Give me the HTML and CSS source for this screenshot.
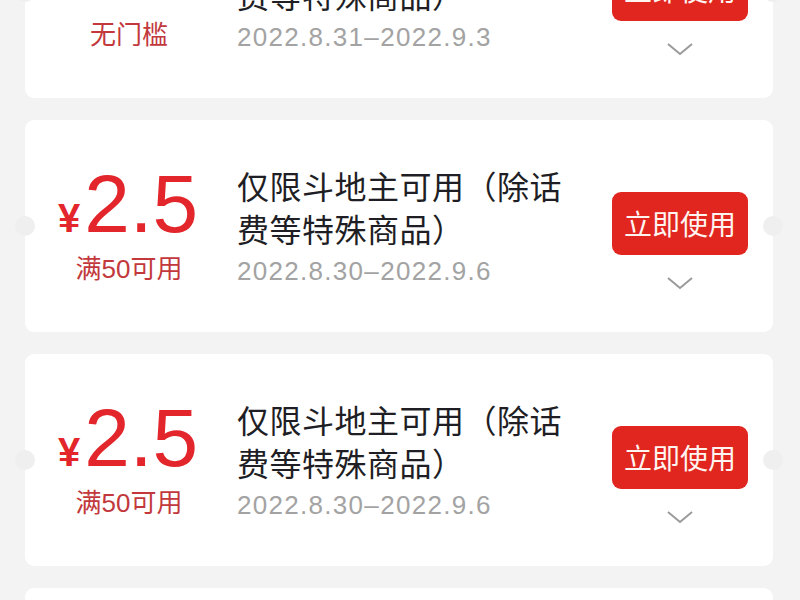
FILE: index.html
```html
<!DOCTYPE html>
<html lang="zh-CN">
<head>
<meta charset="utf-8">
<link rel="stylesheet" href="styles.css">
</head>
<body>
<div class="list">
  <div class="card">
    <div class="left">
      <div class="amount"><span class="yen">¥</span>2.5</div>
      <div class="cond">无门槛</div>
    </div>
    <div class="mid">
      <div class="title">仅限斗地主可用（除话费等特殊商品）</div>
      <div class="date">2022.8.31–2022.9.3</div>
    </div>
    <div class="right">
      <div class="btn">立即使用</div>
      <svg class="chev" width="28" height="14" viewBox="0 0 28 14"><path d="M2 2 L14 12 L26 2" fill="none" stroke="#9a9a9a" stroke-width="2"/></svg>
    </div>
  </div>
  <div class="card">
    <div class="left">
      <div class="amount"><span class="yen">¥</span>2.5</div>
      <div class="cond">满50可用</div>
    </div>
    <div class="mid">
      <div class="title">仅限斗地主可用（除话费等特殊商品）</div>
      <div class="date">2022.8.30–2022.9.6</div>
    </div>
    <div class="right">
      <div class="btn">立即使用</div>
      <svg class="chev" width="28" height="14" viewBox="0 0 28 14"><path d="M2 2 L14 12 L26 2" fill="none" stroke="#9a9a9a" stroke-width="2"/></svg>
    </div>
  </div>
  <div class="card">
    <div class="left">
      <div class="amount"><span class="yen">¥</span>2.5</div>
      <div class="cond">满50可用</div>
    </div>
    <div class="mid">
      <div class="title">仅限斗地主可用（除话费等特殊商品）</div>
      <div class="date">2022.8.30–2022.9.6</div>
    </div>
    <div class="right">
      <div class="btn">立即使用</div>
      <svg class="chev" width="28" height="14" viewBox="0 0 28 14"><path d="M2 2 L14 12 L26 2" fill="none" stroke="#9a9a9a" stroke-width="2"/></svg>
    </div>
  </div>
  <div class="card">
    <div class="left">
      <div class="amount"><span class="yen">¥</span>2.5</div>
      <div class="cond">满50可用</div>
    </div>
    <div class="mid">
      <div class="title">仅限斗地主可用（除话费等特殊商品）</div>
      <div class="date">2022.8.30–2022.9.6</div>
    </div>
    <div class="right">
      <div class="btn">立即使用</div>
      <svg class="chev" width="28" height="14" viewBox="0 0 28 14"><path d="M2 2 L14 12 L26 2" fill="none" stroke="#9a9a9a" stroke-width="2"/></svg>
    </div>
  </div>
</div>
</body>
</html>
```
FILE: styles.css
```css
html, body {
  margin: 0;
  padding: 0;
  background: #f3f3f3;
  overflow: hidden;
  height: 600px;
}
body {
  font-family: "Liberation Sans", "Noto Sans CJK SC", sans-serif;
}
.list {
  margin-top: -114px;
  padding: 0 27px 0 25px;
  display: flex;
  flex-direction: column;
  gap: 22px;
}
.card {
  position: relative;
  height: 212px;
  background: #fff;
  border-radius: 9px;
  display: flex;
  align-items: flex-start;
  box-sizing: border-box;
  padding-top: 44px;
}
.card::before,
.card::after {
  content: "";
  position: absolute;
  top: 50%;
  width: 20px;
  height: 20px;
  margin-top: -10px;
  border-radius: 50%;
  background: #efefef;
}
.card::before { left: -10px; }
.card::after { right: -10px; }
.left {
  width: 208px;
  display: flex;
  flex-direction: column;
  align-items: center;
  color: #e3262b;
}
.amount {
  font-family: "Liberation Sans", sans-serif;
  font-size: 82px;
  line-height: 80px;
  height: 80px;
  padding-right: 2px;
}
.yen {
  font-size: 40px;
  font-weight: bold;
  margin-right: 4px;
}
.cond {
  margin-top: 10px;
  font-family: "Liberation Sans", "Noto Sans CJK SC", sans-serif;
  font-size: 26px;
  line-height: 30px;
  color: #c2383c;
}
.mid {
  width: 340px;
  padding-left: 4px;
  color: #1e1e24;
}
.title {
  font-family: "Noto Sans CJK SC", sans-serif;
  font-size: 32px;
  line-height: 43px;
  letter-spacing: 0.5px;
}
.date {
  margin-top: 4px;
  font-family: "Liberation Sans", sans-serif;
  font-size: 26px;
  line-height: 34px;
  letter-spacing: 1.3px;
  color: #a3a3a3;
}
.right {
  margin-left: auto;
  margin-right: 25px;
  width: 136px;
  display: flex;
  flex-direction: column;
  align-items: center;
  margin-top: 28px;
}
.btn {
  width: 136px;
  height: 63px;
  box-sizing: border-box;
  background: #e0261f;
  border-radius: 9px;
  color: #fff4f0;
  font-family: "Noto Sans CJK SC", sans-serif;
  font-size: 28px;
  line-height: 63px;
  text-align: center;
}
.chev {
  margin-top: 21px;
  display: block;
}
```
